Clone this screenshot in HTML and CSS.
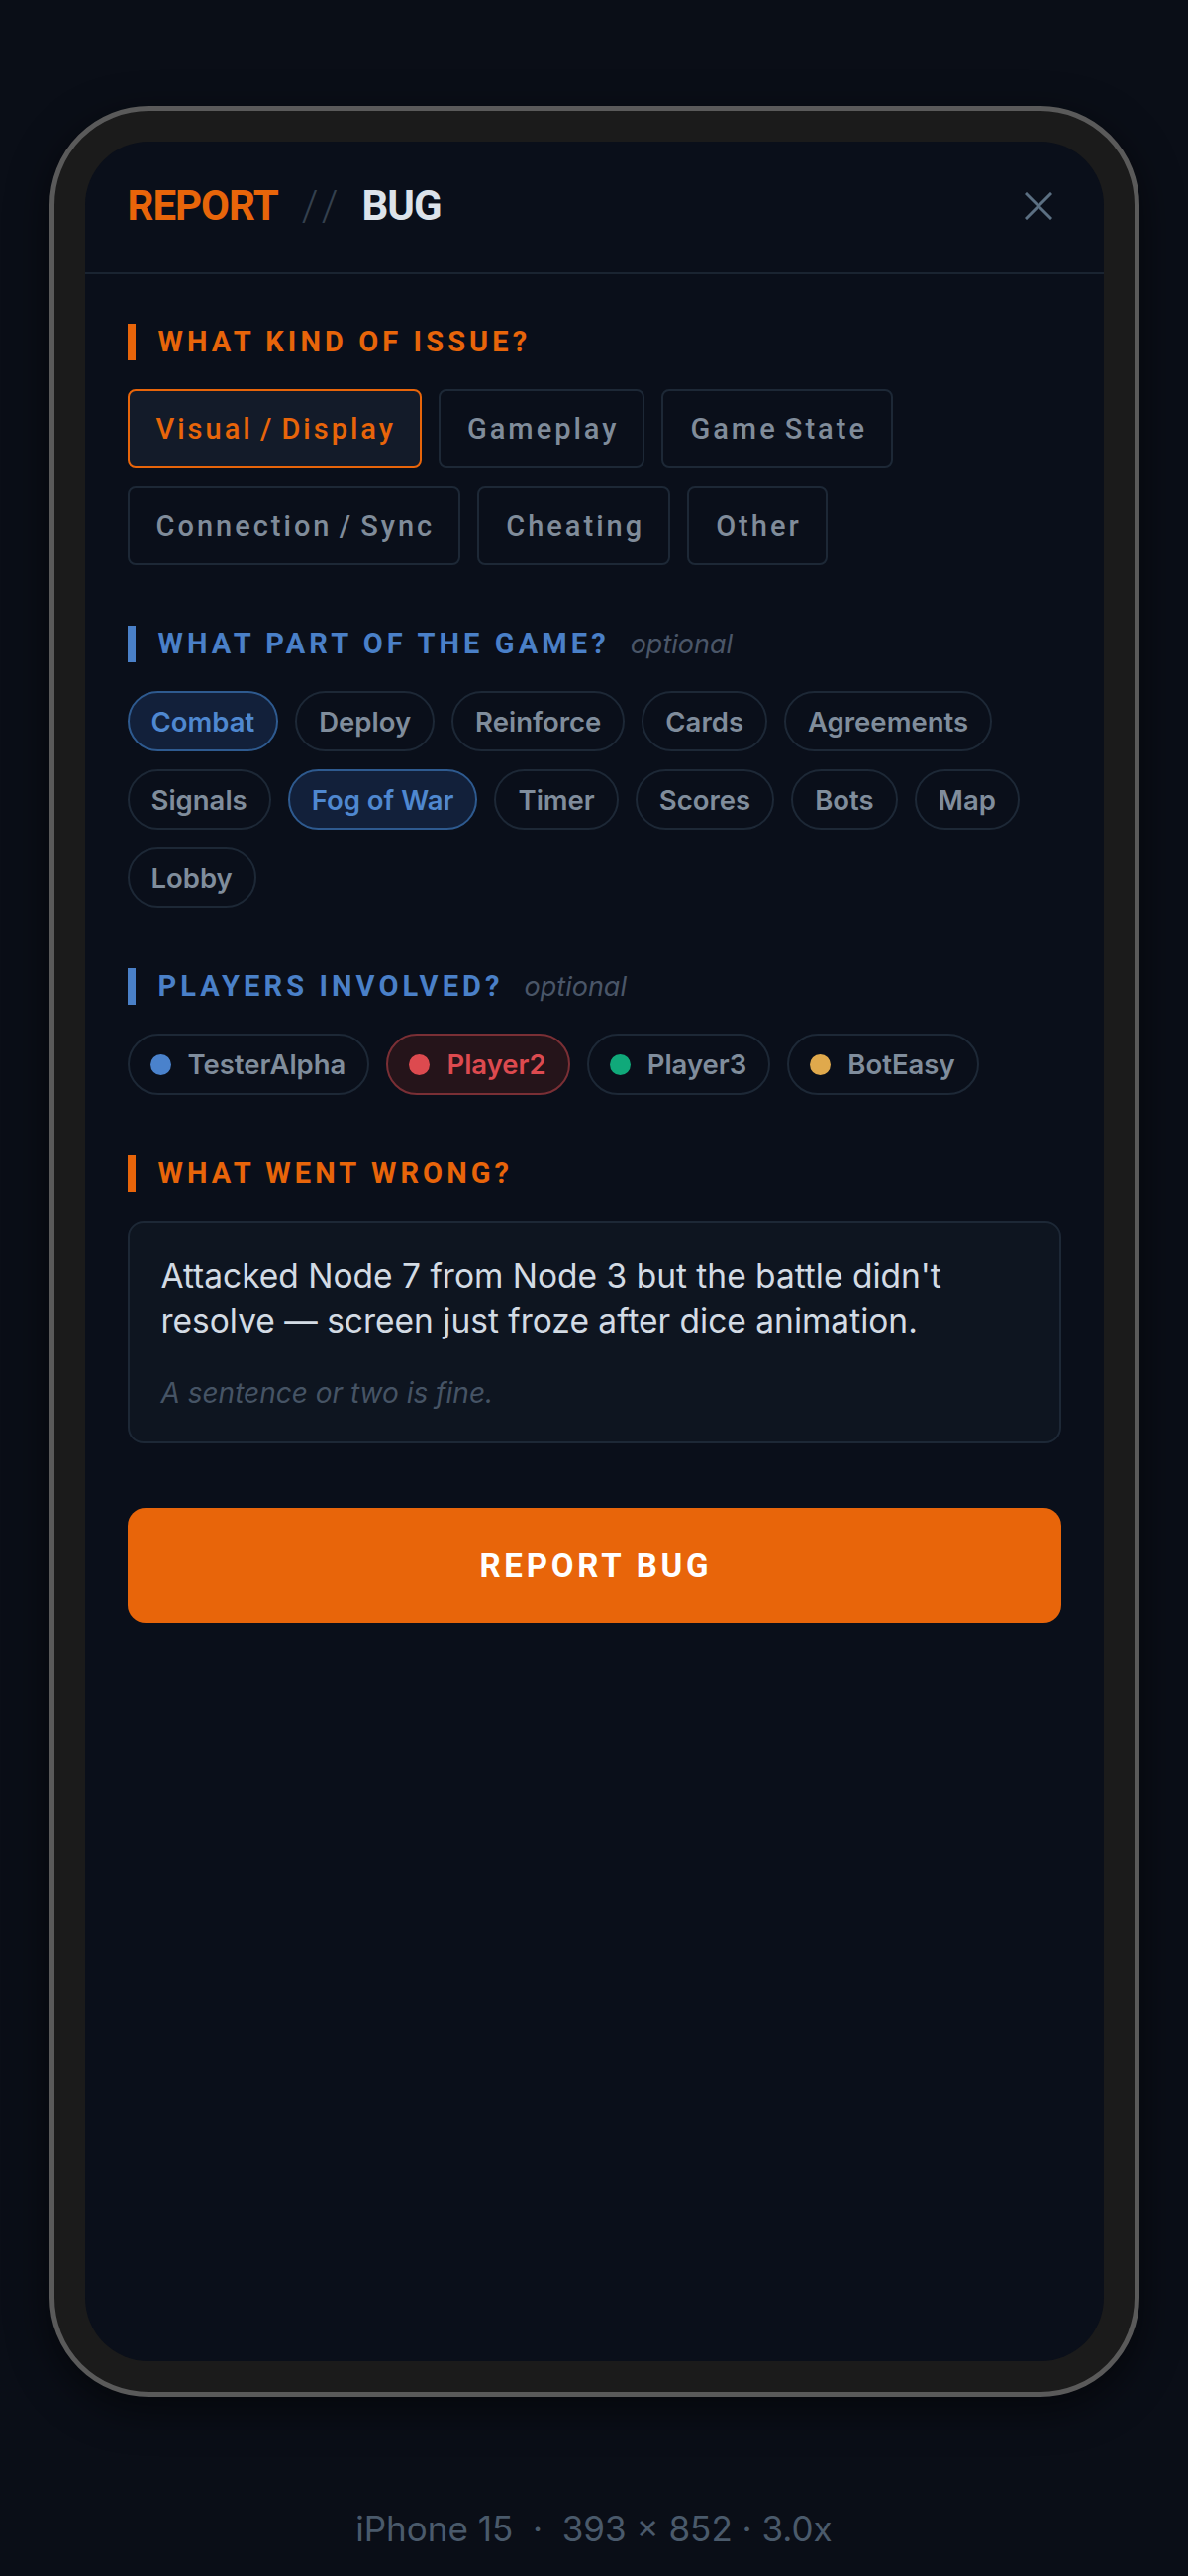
FILE: index.html
```html
<!DOCTYPE html>
<html lang="en">
<head>
  <meta charset="UTF-8">
  <meta name="viewport" content="width=device-width, initial-scale=1.0">
  <title>Report Bug</title>
  <link rel="stylesheet" href="styles.css">
</head>
<body>
  <div class="stage">
    <div class="phone">
      <div class="screen">
        <header class="sheet-head">
          <h1 class="sheet-title"><span class="t-accent">REPORT</span><span class="t-sep">//</span><span class="t-main">BUG</span></h1>
          <button class="close-btn" aria-label="Close">
            <svg width="28" height="28" viewBox="0 0 28 28"><path d="M2 2L26 26M26 2L2 26" stroke="#5b6f82" stroke-width="3" stroke-linecap="square" fill="none"/></svg>
          </button>
        </header>

        <div class="sheet-body">
          <!-- issue type -->
          <section class="field">
            <div class="label label-orange"><span class="label-text">WHAT KIND OF ISSUE?</span></div>
            <div class="choices">
              <button class="choice active">Visual / Display</button>
              <button class="choice">Gameplay</button>
              <button class="choice">Game State</button>
              <button class="choice">Connection / Sync</button>
              <button class="choice">Cheating</button>
              <button class="choice">Other</button>
            </div>
          </section>

          <!-- game area -->
          <section class="field">
            <div class="label label-blue"><span class="label-text">WHAT PART OF THE GAME?</span><span class="label-opt">optional</span></div>
            <div class="chips">
              <button class="chip active">Combat</button>
              <button class="chip">Deploy</button>
              <button class="chip">Reinforce</button>
              <button class="chip">Cards</button>
              <button class="chip">Agreements</button>
              <button class="chip">Signals</button>
              <button class="chip active">Fog of War</button>
              <button class="chip">Timer</button>
              <button class="chip">Scores</button>
              <button class="chip">Bots</button>
              <button class="chip">Map</button>
              <button class="chip">Lobby</button>
            </div>
          </section>

          <!-- players -->
          <section class="field">
            <div class="label label-blue"><span class="label-text">PLAYERS INVOLVED?</span><span class="label-opt">optional</span></div>
            <div class="chips">
              <button class="chip player"><span class="dot dot-blue"></span>TesterAlpha</button>
              <button class="chip player picked"><span class="dot dot-red"></span>Player2</button>
              <button class="chip player"><span class="dot dot-green"></span>Player3</button>
              <button class="chip player"><span class="dot dot-gold"></span>BotEasy</button>
            </div>
          </section>

          <!-- description -->
          <section class="field">
            <div class="label label-orange"><span class="label-text">WHAT WENT WRONG?</span></div>
            <div class="note">
              <p class="note-text">Attacked Node 7 from Node 3 but the battle didn't resolve — screen just froze after dice animation.</p>
              <p class="note-hint">A sentence or two is fine.</p>
            </div>
          </section>

          <button class="submit">REPORT BUG</button>
        </div>
      </div>
    </div>

    <p class="caption">iPhone 15  ·  393 × 852 · 3.0x</p>
  </div>
</body>
</html>
```

FILE: styles.css
```css
* {
  box-sizing: border-box;
}

body {
  margin: 0;
  background-color: #0a0e17;
  font-family: Inter, "Noto Sans", sans-serif;
}

.stage {
  padding-top: 107px;
}

.phone {
  width: 1101px;
  margin: 0 auto;
  padding: 31px;
  border: 5px solid #5a5a5a;
  border-radius: 100px;
  background-color: #1b1b1b;
  box-shadow: 0 12px 40px rgba(0, 0, 0, 0.55);
}

.screen {
  height: 2242px;
  border-radius: 64px;
  background-color: #0a0f1a;
  overflow: hidden;
}

/* header */
.sheet-head {
  height: 134px;
  display: flex;
  align-items: center;
  justify-content: space-between;
  padding: 0 52px 3px 43px;
  border-bottom: 2px solid #1a2431;
}

.sheet-title {
  margin: 0;
  display: flex;
  align-items: baseline;
  font-family: Roboto, "Liberation Sans", sans-serif;
  font-size: 42px;
  font-weight: 700;
  letter-spacing: -1px;
  line-height: 1;
}

.t-accent {
  color: #e8650a;
}

.t-sep {
  margin: 0 16px 0 24px;
  color: #34404e;
  font-weight: 300;
  letter-spacing: 8px;
}

.t-main {
  color: #dce3ea;
}

.close-btn {
  width: 28px;
  height: 28px;
  padding: 0;
  border: 0;
  background: none;
  cursor: pointer;
}

.close-btn svg {
  display: block;
}

/* body */
.sheet-body {
  padding: 50px 43px 0;
}

.field + .field {
  margin-top: 61px;
}

.label {
  display: flex;
  align-items: baseline;
  height: 37px;
  line-height: 37px;
  margin-bottom: 29px;
  padding-left: 23px;
  border-left: 8px solid;
}

.label-orange {
  border-color: #e8650a;
  color: #e8650a;
}

.label-blue {
  border-color: #4a80c8;
  color: #4a80c8;
}

.label-text {
  font-family: Roboto, "Liberation Sans", sans-serif;
  font-size: 29px;
  font-weight: 700;
  letter-spacing: 4.1px;
}

.label-opt {
  margin-left: 21px;
  font-size: 27px;
  font-style: italic;
  color: #4a5668;
}

.choices,
.chips {
  display: flex;
  flex-wrap: wrap;
  gap: 18px 17px;
}

.choice {
  height: 80px;
  padding: 0 24px 0 27px;
  border: 2px solid #1d2836;
  border-radius: 8px;
  background: transparent;
  color: #808c9a;
  font-family: Roboto, "Liberation Sans", sans-serif;
  font-size: 29px;
  font-weight: 500;
  letter-spacing: 3px;
  word-spacing: -3px;
  cursor: pointer;
}

.choice.active {
  border-color: #e8650a;
  background-color: #131b29;
  color: #e8650a;
}

.chip {
  display: inline-flex;
  align-items: center;
  gap: 17px;
  height: 61px;
  padding: 0 22px;
  border: 2px solid #1d2836;
  border-radius: 31px;
  background: transparent;
  color: #808d9c;
  font-family: Inter, sans-serif;
  font-size: 27.5px;
  font-weight: 600;
  cursor: pointer;
}

.chip.active {
  border-color: #2e5a8f;
  background-color: #12203a;
  color: #4f88d0;
}

.chip.player {
  height: 62px;
  padding-left: 21px;
}

.chip.picked {
  border-color: #7a2f35;
  background-color: #25141a;
  color: #dd4a4f;
}

.dot {
  width: 21px;
  height: 21px;
  border-radius: 50%;
}

.dot-blue { background-color: #4a82cc; }
.dot-red { background-color: #dd4a4f; }
.dot-green { background-color: #10a97a; }
.dot-gold { background-color: #e0a94c; }

.note {
  padding: 32px 32px 30px;
  border: 2px solid #1d2836;
  border-radius: 16px;
  background-color: #0e1520;
}

.note-text {
  margin: 0;
  font-size: 33.5px;
  line-height: 45px;
  color: #d3dbe4;
}

.note-hint {
  margin: 32px 0 0;
  font-size: 28px;
  font-style: italic;
  line-height: 37px;
  color: #465465;
}

.submit {
  display: block;
  width: 100%;
  height: 116px;
  margin-top: 65px;
  padding: 0 0 0 3.8px;
  border: 0;
  border-radius: 18px;
  background-color: #e8650a;
  color: #fff;
  font-family: Roboto, "Liberation Sans", sans-serif;
  font-size: 33px;
  font-weight: 700;
  letter-spacing: 3.8px;
  cursor: pointer;
}

.caption {
  margin: 112px 0 0;
  text-align: center;
  white-space: pre;
  font-size: 35px;
  color: #4a5a6b;
}
```
